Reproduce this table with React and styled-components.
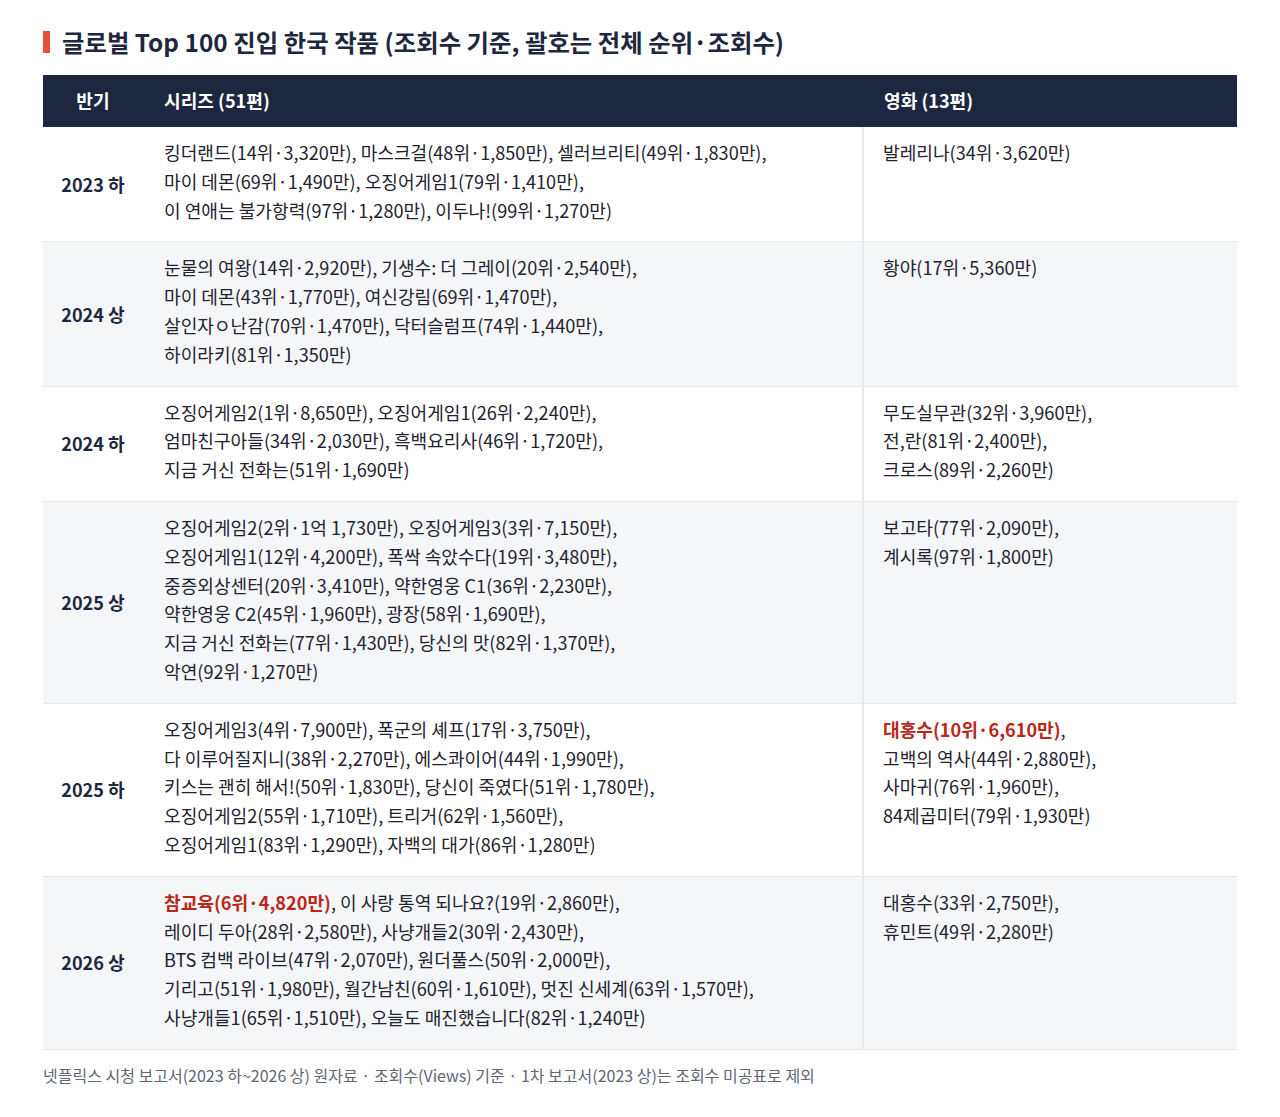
import React from "react";
import styled, { createGlobalStyle } from "styled-components";

const GlobalStyle = createGlobalStyle`
	* { box-sizing: border-box; }
	body {
		margin: 0;
		background: #ffffff;
		font-family: "Noto Sans CJK KR", "Noto Sans", sans-serif;
		color: #1f2230;
	}
`;

const colors = {
	navy: "#1e2740",
	red: "#b8281a",
	accent: "#e0523a",
	stripe: "#f5f6f8",
	line: "#e6e8ee",
	muted: "#5f6675",
};

const Page = styled.section`
	padding: 25px 43px 20px;
`;

const Title = styled.h2`
	display: flex;
	align-items: center;
	gap: 12px;
	margin: 0 0 16px;
	font-size: 24.4px;
	font-weight: 700;
	line-height: 34px;
	color: ${colors.navy};
	&::before {
		content: "";
		width: 7px;
		height: 22px;
		background: ${colors.accent};
	}
`;

const Table = styled.table`
	width: 100%;
	border-collapse: collapse;
	table-layout: fixed;
	font-size: 18.1px;
	line-height: 28.8px;
`;

const HeadCell = styled.th`
	height: 52px;
	padding: 0 0 2px ${(p) => (p.$center ? "0" : "21px")};
	background: ${colors.navy};
	color: #ffffff;
	font-weight: 700;
	text-align: ${(p) => (p.$center ? "center" : "left")};
`;

const Row = styled.tr`
	background: ${(p) => (p.$striped ? colors.stripe : "#ffffff")};
	border-bottom: 1px solid ${colors.line};
`;

const Period = styled.td`
	text-align: center;
	font-weight: 700;
	color: ${colors.navy};
	vertical-align: middle;
`;

const Cell = styled.td`
	padding: 11px 21px 17px ${(p) => (p.$divided ? "19px" : "21px")};
	vertical-align: top;
	color: #1f2230;
	border-left: ${(p) => (p.$divided ? `2px solid ${colors.line}` : "none")};
`;

const Line = styled.div`
	white-space: nowrap;
`;

const Hot = styled.strong`
	color: ${colors.red};
	font-weight: 700;
`;

const Note = styled.p`
	margin: 13px 0 0;
	font-size: 16px;
	color: ${colors.muted};
`;

const rows = [
	{
		period: "2023 하",
		series: [
			["킹더랜드(14위·3,320만), 마스크걸(48위·1,850만), 셀러브리티(49위·1,830만),"],
			["마이 데몬(69위·1,490만), 오징어게임1(79위·1,410만),"],
			["이 연애는 불가항력(97위·1,280만), 이두나!(99위·1,270만)"],
		],
		films: [["발레리나(34위·3,620만)"]],
	},
	{
		period: "2024 상",
		series: [
			["눈물의 여왕(14위·2,920만), 기생수: 더 그레이(20위·2,540만),"],
			["마이 데몬(43위·1,770만), 여신강림(69위·1,470만),"],
			["살인자ㅇ난감(70위·1,470만), 닥터슬럼프(74위·1,440만),"],
			["하이라키(81위·1,350만)"],
		],
		films: [["황야(17위·5,360만)"]],
	},
	{
		period: "2024 하",
		series: [
			["오징어게임2(1위·8,650만), 오징어게임1(26위·2,240만),"],
			["엄마친구아들(34위·2,030만), 흑백요리사(46위·1,720만),"],
			["지금 거신 전화는(51위·1,690만)"],
		],
		films: [
			["무도실무관(32위·3,960만),"],
			["전,란(81위·2,400만),"],
			["크로스(89위·2,260만)"],
		],
	},
	{
		period: "2025 상",
		series: [
			["오징어게임2(2위·1억 1,730만), 오징어게임3(3위·7,150만),"],
			["오징어게임1(12위·4,200만), 폭싹 속았수다(19위·3,480만),"],
			["중증외상센터(20위·3,410만), 약한영웅 C1(36위·2,230만),"],
			["약한영웅 C2(45위·1,960만), 광장(58위·1,690만),"],
			["지금 거신 전화는(77위·1,430만), 당신의 맛(82위·1,370만),"],
			["악연(92위·1,270만)"],
		],
		films: [["보고타(77위·2,090만),"], ["계시록(97위·1,800만)"]],
	},
	{
		period: "2025 하",
		series: [
			["오징어게임3(4위·7,900만), 폭군의 셰프(17위·3,750만),"],
			["다 이루어질지니(38위·2,270만), 에스콰이어(44위·1,990만),"],
			["키스는 괜히 해서!(50위·1,830만), 당신이 죽였다(51위·1,780만),"],
			["오징어게임2(55위·1,710만), 트리거(62위·1,560만),"],
			["오징어게임1(83위·1,290만), 자백의 대가(86위·1,280만)"],
		],
		films: [
			["대홍수(10위·6,610만)", ","],
			["고백의 역사(44위·2,880만),"],
			["사마귀(76위·1,960만),"],
			["84제곱미터(79위·1,930만)"],
		],
		hotFilm: true,
	},
	{
		period: "2026 상",
		series: [
			["참교육(6위·4,820만)", ", 이 사랑 통역 되나요?(19위·2,860만),"],
			["레이디 두아(28위·2,580만), 사냥개들2(30위·2,430만),"],
			["BTS 컴백 라이브(47위·2,070만), 원더풀스(50위·2,000만),"],
			["기리고(51위·1,980만), 월간남친(60위·1,610만), 멋진 신세계(63위·1,570만),"],
			["사냥개들1(65위·1,510만), 오늘도 매진했습니다(82위·1,240만)"],
		],
		films: [["대홍수(33위·2,750만),"], ["휴민트(49위·2,280만)"]],
		hotSeries: true,
	},
];

const Lines = ({ items, hot }) =>
	items.map((parts, i) =>
		hot && i === 0 ? (
			<Line key={i}>
				<Hot>{parts[0]}</Hot>
				{parts[1]}
			</Line>
		) : (
			<Line key={i}>{parts[0]}</Line>
		)
	);

const App = () => {
	return (
		<>
			<GlobalStyle />
			<Page>
				<Title>글로벌 Top 100 진입 한국 작품 (조회수 기준, 괄호는 전체 순위·조회수)</Title>
				<Table>
					<colgroup>
						<col style={{ width: "100px" }} />
						<col style={{ width: "720px" }} />
						<col />
					</colgroup>
					<thead>
						<tr>
							<HeadCell $center>반기</HeadCell>
							<HeadCell>시리즈 (51편)</HeadCell>
							<HeadCell>영화 (13편)</HeadCell>
						</tr>
					</thead>
					<tbody>
						{rows.map((row, i) => (
							<Row key={row.period} $striped={i % 2 === 1}>
								<Period>{row.period}</Period>
								<Cell>
									<Lines items={row.series} hot={row.hotSeries} />
								</Cell>
								<Cell $divided>
									<Lines items={row.films} hot={row.hotFilm} />
								</Cell>
							</Row>
						))}
					</tbody>
				</Table>
				<Note>
					넷플릭스 시청 보고서(2023 하~2026 상) 원자료 · 조회수(Views) 기준 · 1차 보고서(2023 상)는 조회수 미공표로 제외
				</Note>
			</Page>
		</>
	);
};

export default App;
